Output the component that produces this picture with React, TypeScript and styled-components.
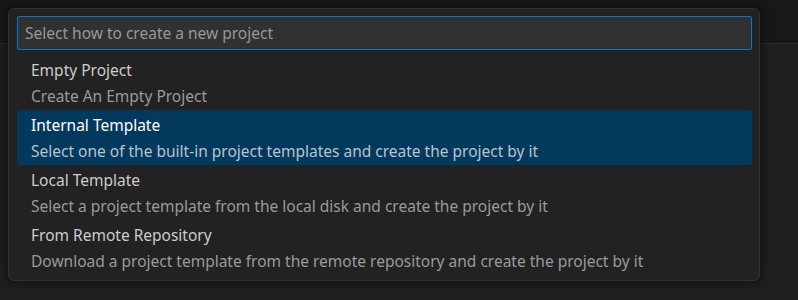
import React from 'react';
import styled, { createGlobalStyle } from 'styled-components';

const GlobalStyle = createGlobalStyle`
    html, body {
        margin: 0;
        padding: 0;
        background: #1f1f1f;
    }
    body {
        font-family: "Noto Sans", "Open Sans", sans-serif;
    }
`;

const Workbench = styled.div`
    position: relative;
    width: 798px;
    height: 300px;
    display: flex;
    flex-direction: column;
    overflow: hidden;
`;

const TitleBar = styled.div`
    height: 43px;
    flex-shrink: 0;
    background-color: #181818;
    border-bottom: 1px solid #2b2b2b;
`;

const Editor = styled.div`
    flex: 1;
    background-color: #1f1f1f;
`;

const QuickInput = styled.div`
    position: absolute;
    top: 8px;
    left: 8px;
    width: 752px;
    box-sizing: border-box;
    background-color: #222222;
    border: 1px solid #313131;
    border-radius: 6px;
    box-shadow: 0 0 8px 2px rgba(0, 0, 0, 0.45);
    padding: 7px 7px 5px 8px;
    display: flex;
    flex-direction: column;
    gap: 5px;
`;

const SearchBox = styled.input`
    height: 34px;
    box-sizing: border-box;
    width: 100%;
    margin: 0;
    padding: 0 7px;
    background-color: #313131;
    border: 1px solid #0078d4;
    border-radius: 2px;
    color: #cccccc;
    font-family: inherit;
    font-size: 15.5px;
    outline: none;
    &::placeholder {
        color: #989898;
    }
`;

const List = styled.ul`
    list-style: none;
    margin: 0;
    padding: 0;
    display: flex;
    flex-direction: column;
`;

const Item = styled.li<{ $active?: boolean }>`
    height: 55px;
    box-sizing: border-box;
    padding: 0 14px;
    border-radius: 3px;
    display: flex;
    flex-direction: column;
    justify-content: center;
    background-color: ${p => (p.$active ? '#04395e' : 'transparent')};
    font-size: 15.5px;
    line-height: 26px;
    white-space: nowrap;
`;

const Label = styled.span<{ $active?: boolean }>`
    color: ${p => (p.$active ? '#ffffff' : '#cccccc')};
`;

const Detail = styled.span<{ $active?: boolean }>`
    color: ${p => (p.$active ? '#b7c3cc' : '#9a9a9a')};
`;

const options = [
    { label: 'Empty Project', detail: 'Create An Empty Project' },
    { label: 'Internal Template', detail: 'Select one of the built-in project templates and create the project by it' },
    { label: 'Local Template', detail: 'Select a project template from the local disk and create the project by it' },
    { label: 'From Remote Repository', detail: 'Download a project template from the remote repository and create the project by it' },
];

const App = () => {
    const active = 1;
    return (
        <>
            <GlobalStyle />
            <Workbench>
                <TitleBar />
                <Editor />
                <QuickInput>
                    <SearchBox placeholder='Select how to create a new project' />
                    <List>
                        {options.map((o, i) => (
                            <Item key={o.label} $active={i === active}>
                                <Label $active={i === active}>{o.label}</Label>
                                <Detail $active={i === active}>{o.detail}</Detail>
                            </Item>
                        ))}
                    </List>
                </QuickInput>
            </Workbench>
        </>
    );
};

export default App;
